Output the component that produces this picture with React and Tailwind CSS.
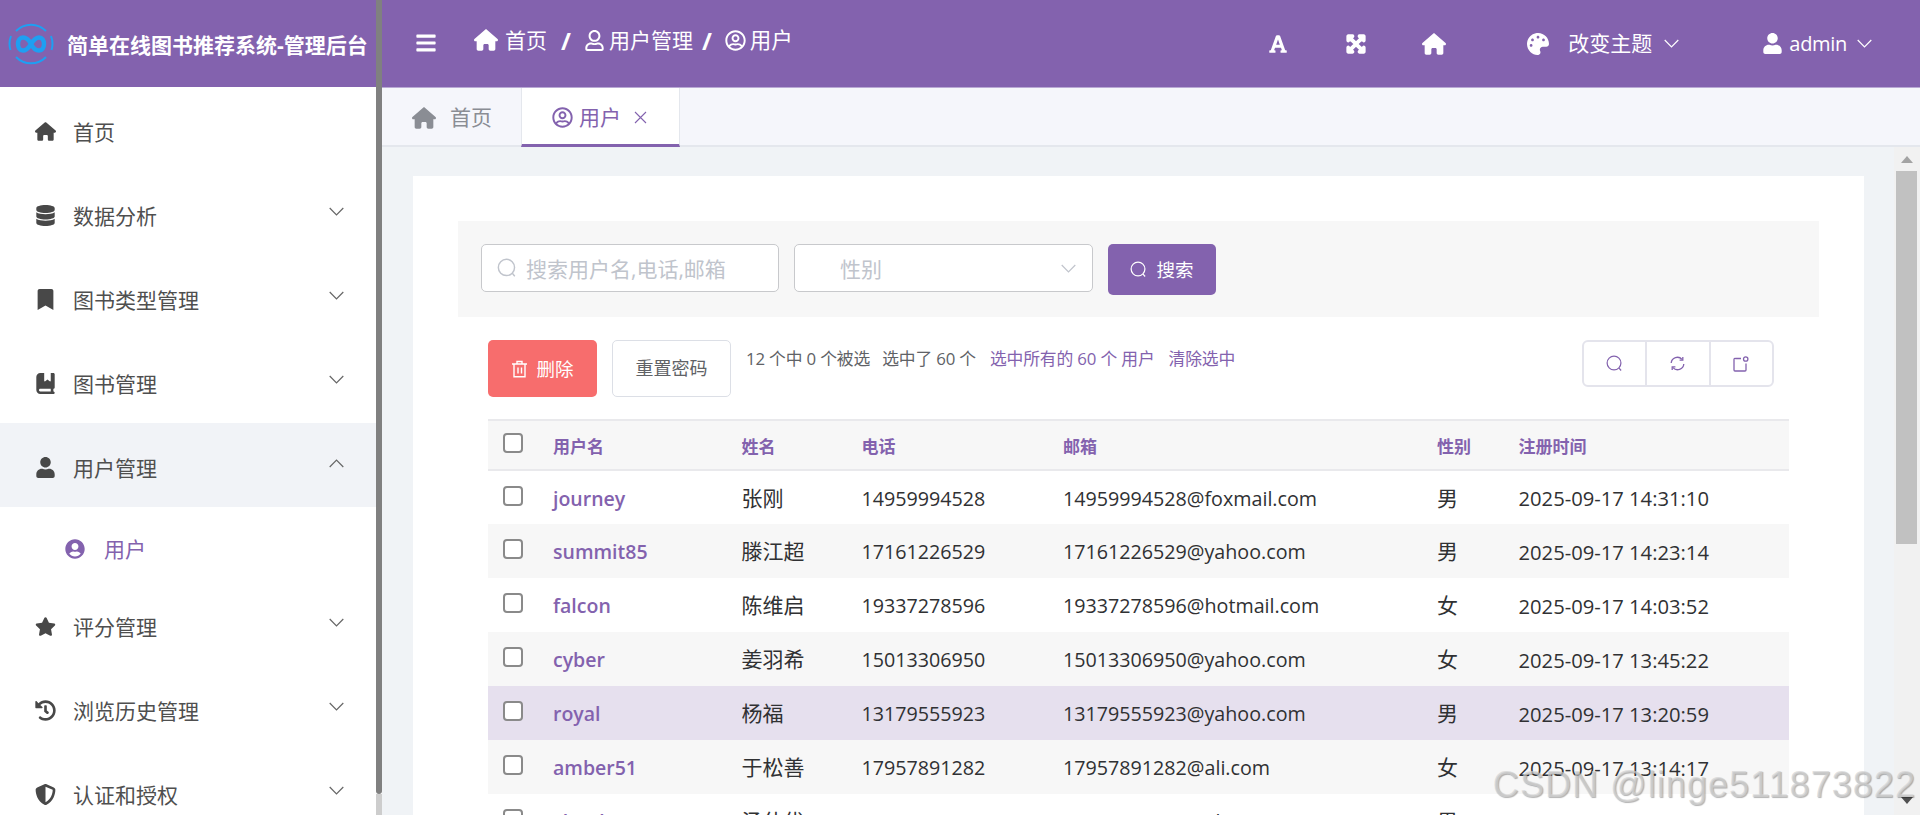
import React from "react";
import { FaDatabase, FaBookmark, FaUser, FaUserCircle, FaRegUserCircle, FaRegUser, FaStar, FaHistory, FaFont, FaExpandArrowsAlt, FaPalette, FaBars } from "react-icons/fa";
import { FaBookBookmark, FaShieldHalved, FaHouse } from "react-icons/fa6";

const Chevron = ({ up, className = "" }) => (
  <svg width="15" height="9" viewBox="0 0 15 9" fill="none" stroke="currentColor" strokeWidth="1.2" className={className}>
    <polyline points={up ? "0.7,8 7.5,1 14.3,8" : "0.7,1 7.5,8 14.3,1"} />
  </svg>
);

const SearchIcon = ({ size = 18, className = "" }) => (
  <svg width={size} height={size} viewBox="0 0 18 18" fill="none" stroke="currentColor" strokeWidth="1.3" className={className}>
    <circle cx="8.5" cy="8.5" r="7.3" />
    <path d="M13.8 13.8 L16 16.4" />
  </svg>
);

const Logo = () => (
  <svg width="46" height="46" viewBox="0 0 46 46" fill="none" className="ml-[8px] shrink-0">
    <path d="M8 10 A21 21 0 0 1 38 10" stroke="#1e9ff2" strokeWidth="2" />
    <path d="M3 15 A21 21 0 0 0 2.5 29" stroke="#1e9ff2" strokeWidth="2" />
    <path d="M43 15 A21 21 0 0 1 43.5 29" stroke="#1e9ff2" strokeWidth="2" />
    <path d="M8 36 A21 21 0 0 0 38 36" stroke="#1e9ff2" strokeWidth="2" />
    <path d="M23 23 C20 17 17 16.5 15 16.5 C12 16.5 10 19.5 10 23 C10 26.5 12 29.5 15 29.5 C19 29.5 21 26 23 23 C25 20 27 16.5 31 16.5 C34 16.5 36 19.5 36 23 C36 26.5 34 29.5 31 29.5 C29 29.5 26 29 23 23" stroke="#1e9ff2" strokeWidth="4.5" />
  </svg>
);

const navItems = [
  { label: "首页", Icon: FaHouse },
  { label: "数据分析", Icon: FaDatabase, arrow: true },
  { label: "图书类型管理", Icon: FaBookmark, arrow: true },
  { label: "图书管理", Icon: FaBookBookmark, arrow: true },
  { label: "用户管理", Icon: FaUser, arrow: true, open: true },
  { label: "评分管理", Icon: FaStar, arrow: true },
  { label: "浏览历史管理", Icon: FaHistory, arrow: true },
  { label: "认证和授权", Icon: FaShieldHalved, arrow: true },
];

const rows = [
  ["journey", "张刚", "14959994528", "14959994528@foxmail.com", "男", "2025-09-17 14:31:10"],
  ["summit85", "滕江超", "17161226529", "17161226529@yahoo.com", "男", "2025-09-17 14:23:14"],
  ["falcon", "陈维启", "19337278596", "19337278596@hotmail.com", "女", "2025-09-17 14:03:52"],
  ["cyber", "姜羽希", "15013306950", "15013306950@yahoo.com", "女", "2025-09-17 13:45:22"],
  ["royal", "杨福", "13179555923", "13179555923@yahoo.com", "男", "2025-09-17 13:20:59"],
  ["amber51", "于松善", "17957891282", "17957891282@ali.com", "女", "2025-09-17 13:14:17"],
  ["cloud", "汤仕优", "18168501094", "18168501094@ali.com", "男", "2025-09-17 13:54:35"],
];

const rowBg = ["bg-white", "bg-[#f7f7f7]", "bg-white", "bg-[#f7f7f7]", "bg-[#e6e0ee]", "bg-[#f7f7f7]", "bg-white"];

const Check = () => (
  <span className="block w-[20px] h-[20px] ml-[15px] rounded-[4px] border-2 border-[#8a8a8a] bg-white" />
);

function NavRow({ item }) {
  const { label, Icon, arrow, open } = item;
  return (
    <div className={`flex items-center h-[84px] shrink-0 ${open ? "bg-[#f1f3f7]" : ""}`}>
      <span className="ml-[33px] w-[24px] flex justify-center pt-[5px] text-[#484848]">
        <Icon size={21} />
      </span>
      <span className="ml-[16px] flex-1 pt-[6px] text-[21px] leading-[28px] text-[#4f4f4f]">{label}</span>
      {arrow && <Chevron up={open} className="mr-[32px] mb-[3px] text-[#666666]" />}
    </div>
  );
}

export default function App() {
  return (
    <div className="relative flex w-[1920px] h-[815px] overflow-hidden bg-white font-['Open_Sans','Noto_Sans_CJK_SC',sans-serif]">
      {/* Sidebar */}
      <aside className="flex flex-col w-[376px] shrink-0 overflow-hidden">
        <div className="flex items-center h-[87px] shrink-0 bg-[#8362ae]">
          <Logo />
          <span className="ml-[13px] text-[21px] font-bold text-white whitespace-nowrap leading-[28px] pt-[2px]">简单在线图书推荐系统-管理后台</span>
        </div>
        {navItems.slice(0, 5).map((it) => <NavRow key={it.label} item={it} />)}
        <div className="flex items-center h-[75px] shrink-0 pt-[9px]">
          <span className="ml-[65px] text-[#8362ae]"><FaUserCircle size={20} /></span>
          <span className="ml-[19px] text-[21px] leading-[28px] text-[#8362ae]">用户</span>
        </div>
        {navItems.slice(5).map((it) => <NavRow key={it.label} item={it} />)}
      </aside>
      <div className="flex flex-col w-[6px] shrink-0">
        <div className="h-[794px] bg-[#808080] rounded-b-[3px]" />
        <div className="flex-1 bg-[#cdcdcd]" />
      </div>

      {/* Main */}
      <main className="flex flex-col flex-1 min-w-0">
        <header className="flex items-center h-[88px] shrink-0 bg-[#8362ae] border-b border-[#b9a9d4] text-white">
          <FaBars size={22} className="ml-[33px] mb-[2px]" />
          <FaHouse size={24} className="ml-[37px] mb-[7px]" />
          <span className="ml-[7px] text-[21px] mb-[6px]">首页</span>
          <span className="ml-[14px] mb-[6px] text-[24px] font-bold">/</span>
          <FaRegUser size={21} className="ml-[13px] mb-[7px]" />
          <span className="ml-[4px] text-[21px] mb-[6px]">用户管理</span>
          <span className="ml-[9px] mb-[6px] text-[24px] font-bold">/</span>
          <FaRegUserCircle size={21} className="ml-[13px] mb-[7px]" />
          <span className="ml-[4px] text-[21.5px] mb-[6px]">用户</span>
          <div className="flex-1" />
          <FaFont size={20} />
          <FaExpandArrowsAlt size={20} stroke="currentColor" strokeWidth="45" className="ml-[58px]" />
          <FaHouse size={24} className="ml-[56px]" />
          <FaPalette size={22} className="ml-[81px]" />
          <span className="ml-[19px] text-[21px]">改变主题</span>
          <Chevron className="ml-[12px]" />
          <FaUser size={21} className="ml-[83px]" />
          <span className="ml-[6px] text-[20px] tracking-[-0.3px]">admin</span>
          <Chevron className="ml-[10px] mr-[48px]" />
        </header>

        {/* Tabs */}
        <div className="flex h-[59px] shrink-0 bg-[#f5f6fb] border-b-2 border-[#e4e7ed]">
          <div className="flex items-center w-[139px] text-[#8a8d94] pt-[2px]">
            <FaHouse size={24} className="ml-[30px]" />
            <span className="ml-[14px] text-[21px]">首页</span>
          </div>
          <div className="flex items-center w-[159px] h-[59px] pt-[3px] bg-white border-x border-[#e4e7ed] border-b-[3px] border-b-[#8362ae] text-[#8362ae]">
            <FaRegUserCircle size={21} className="ml-[30px]" />
            <span className="ml-[6px] text-[21px]">用户</span>
            <svg width="13" height="13" viewBox="0 0 13 13" stroke="currentColor" strokeWidth="1.1" className="ml-[13px]"><path d="M1 1 L12 12 M12 1 L1 12" /></svg>
          </div>
        </div>

        {/* Content */}
        <div className="flex flex-1 min-h-0 bg-[#f0f3f6]">
          <div className="flex-1 min-w-0 pl-[31px] pr-[30px] pt-[29px] overflow-hidden">
            <section className="bg-white h-[800px] px-[45px] pt-[45px]">
              <div className="flex items-start h-[96px] bg-[#f7f7f7] pl-[23px] pt-[23px]">
                <div className="flex items-center w-[298px] h-[48px] bg-white border border-[#c8c9cc] rounded-[5px]">
                  <SearchIcon size={20} className="ml-[15px] text-[#c0c4cc]" />
                  <input readOnly placeholder="搜索用户名,电话,邮箱" className="ml-[9px] w-[240px] pt-[3px] text-[21px] outline-none placeholder-[#c0c4cc]" />
                </div>
                <div className="flex items-center w-[299px] h-[48px] ml-[15px] bg-white border border-[#c8c9cc] rounded-[5px]">
                  <span className="ml-[45px] flex-1 pt-[3px] text-[21px] text-[#c0c4cc]">性别</span>
                  <Chevron className="mr-[16px] text-[#c0c4cc]" />
                </div>
                <button className="flex items-center justify-center gap-[9px] w-[108px] h-[51px] ml-[15px] bg-[#8362ae] text-white rounded-[5px]">
                  <SearchIcon size={17} />
                  <span className="text-[18.5px]">搜索</span>
                </button>
              </div>

              <div className="flex items-start pl-[30px] pr-[45px] mt-[23px] h-[57px]">
                <button className="flex items-center justify-center gap-[8px] w-[109px] h-[57px] bg-[#f76d6d] text-white rounded-[5px]">
                  <svg width="17" height="18" viewBox="0 0 17 18" fill="none" stroke="currentColor" strokeWidth="1.4"><path d="M1 4 H16 M6 4 V1.5 H11 V4 M3 4 V16.8 H14 V4 M7 7.5 V13.5 M10.5 7.5 V13.5" /></svg>
                  <span className="text-[18.5px]">删除</span>
                </button>
                <button className="w-[119px] h-[57px] ml-[15px] bg-white border border-[#dcdfe6] rounded-[5px] text-[18px] text-[#606266]">重置密码</button>
                <div className="flex items-center ml-[15px] mt-[6px] text-[16.8px] leading-[26px] tracking-[-0.15px] whitespace-nowrap">
                  <span className="text-[#606266]">12 个中 0 个被选</span>
                  <span className="ml-[12px] text-[#606266]">选中了 60 个</span>
                  <span className="ml-[14px] text-[#8362ae]">选中所有的 60 个 用户</span>
                  <span className="ml-[14px] text-[#8362ae]">清除选中</span>
                </div>
                <div className="flex ml-auto w-[192px] h-[47px] border-2 border-[#e4e4ec] rounded-[6px] text-[#8362ae] divide-x-2 divide-[#e4e4ec]">
                  <span className="flex-1 flex items-center justify-center"><SearchIcon size={17} /></span>
                  <span className="flex-1 flex items-center justify-center">
                    <svg width="15" height="15" viewBox="0 0 15 15" fill="none" stroke="currentColor" strokeWidth="1.3"><path d="M1.2 7 A6.2 6.2 0 0 1 12 3.4 M13.8 8 A6.2 6.2 0 0 1 3 11.6" /><path d="M12.8 1 V4.2 H9.6 M2.2 14 V10.8 H5.4" /></svg>
                  </span>
                  <span className="flex-1 flex items-center justify-center">
                    <svg width="16" height="16" viewBox="0 0 16 16" fill="none" stroke="currentColor" strokeWidth="1.3"><path d="M8 2.5 H2.5 A1 1 0 0 0 1 3.5 V14 A1 1 0 0 0 2 15 H12 A1 1 0 0 0 13 14 V7.5" /><circle cx="12.7" cy="3" r="2.2" /></svg>
                  </span>
                </div>
              </div>

              <div className="pl-[30px] pr-[30px] mt-[22px]">
                <table className="w-full table-fixed border-collapse text-[19.7px] text-[#303133]">
                  <colgroup>
                    <col className="w-[65px]" />
                    <col className="w-[188.5px]" />
                    <col className="w-[120px]" />
                    <col className="w-[201.5px]" />
                    <col className="w-[374px]" />
                    <col className="w-[81.5px]" />
                    <col />
                  </colgroup>
                  <thead>
                    <tr className="h-[50px] bg-[#f7f7f7] border-y-2 border-[#e9e9ec]">
                      <th className="p-0 align-top pt-[12px]"><Check /></th>
                      {["用户名", "姓名", "电话", "邮箱", "性别", "注册时间"].map((h) => (
                        <th key={h} className="p-0 text-left text-[17px] font-bold text-[#8362ae] pt-[3px]">{h}</th>
                      ))}
                    </tr>
                  </thead>
                  <tbody>
                    {rows.map((r, i) => (
                      <tr key={r[0]} className={`h-[54px] ${rowBg[i]}`}>
                        <td className="p-0 align-top pt-[15px]"><Check /></td>
                        <td className="p-0 pt-[2px] font-semibold text-[19.5px] text-[#8362ae]">{r[0]}</td>
                        <td className="p-0 pt-[2px] text-[21px]">{r[1]}</td>
                        <td className="p-0 pt-[2px]">{r[2]}</td>
                        <td className="p-0 pt-[2px]">{r[3]}</td>
                        <td className="p-0 pt-[2px] text-[21px]">{r[4]}</td>
                        <td className="p-0 pt-[2px] text-[20.2px]">{r[5]}</td>
                      </tr>
                    ))}
                  </tbody>
                </table>
              </div>
            </section>
          </div>

          {/* Scrollbar */}
          <div className="flex flex-col items-center w-[26px] shrink-0 bg-[#f1f1f1]">
            <div className="flex items-center justify-center h-[24px] w-full shrink-0">
              <span className="w-0 h-0 border-x-[6px] border-x-transparent border-b-[7px] border-b-[#a3a3a3]" />
            </div>
            <div className="w-[21px] h-[373px] shrink-0 bg-[#c1c1c1] -translate-x-[1px]" />
            <div className="flex-1" />
            <div className="flex items-center justify-center h-[22px] w-full shrink-0 mb-[4px]">
              <span className="w-0 h-0 border-x-[6px] border-x-transparent border-t-[7px] border-t-[#505050]" />
            </div>
          </div>
        </div>
      </main>

      {/* Watermark */}
      <div className="absolute right-[4px] top-[761px] text-[36px] leading-[48px] tracking-[1.05px] whitespace-nowrap text-[#d4d4d4]/70 font-['Liberation_Sans',sans-serif] [text-shadow:1px_1px_1px_rgba(0,0,0,0.3)]">
        CSDN @linge511873822
      </div>
    </div>
  );
}
